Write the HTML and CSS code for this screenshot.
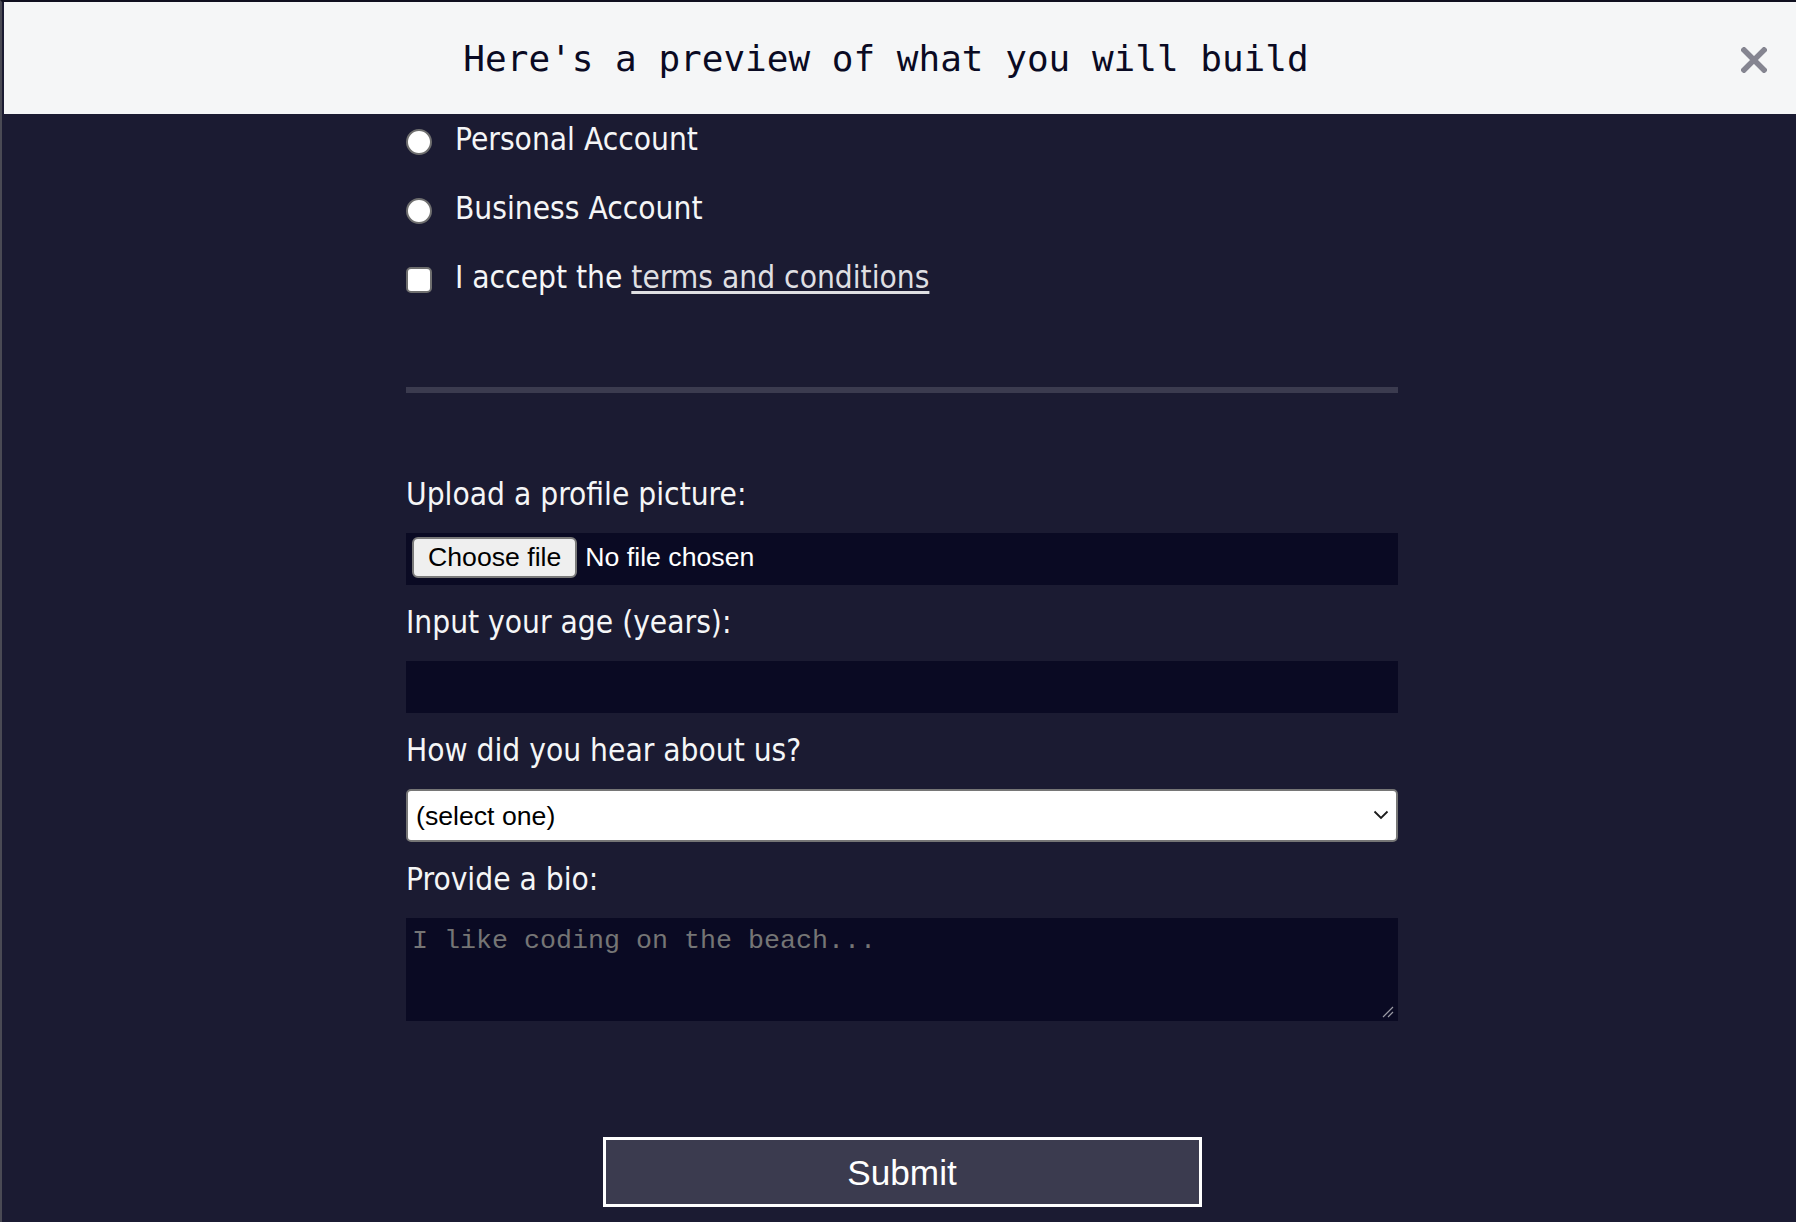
FILE: index.html
```html
<!DOCTYPE html>
<html lang="en">
<head>
<meta charset="utf-8">
<title>Preview</title>
<link rel="stylesheet" href="styles.css">
</head>
<body>
  <header class="modal-header">
    <h3 class="title">Here's a preview of what you will build</h3>
    <button class="close" type="button" aria-label="Close">
      <svg width="26" height="26" viewBox="0 0 26 26"><path d="M3 3 L23 23 M23 3 L3 23" stroke="#858591" stroke-width="5.5" stroke-linecap="square" fill="none"/></svg>
    </button>
  </header>
  <main class="preview">
    <form class="form">
      <fieldset class="group group-top">
        <label class="option"><input class="control radio" type="radio" name="account"><span>Personal Account</span></label>
        <label class="option"><input class="control radio" type="radio" name="account"><span>Business Account</span></label>
        <label class="option"><input class="control check" type="checkbox"><span>I accept the <a class="link" href="#">terms and conditions</a></span></label>
      </fieldset>
      <fieldset class="group fields">
        <label class="field-label" for="profile-pic">Upload a profile picture:</label>
        <label class="text-input file-input">
          <input class="file-native" id="profile-pic" type="file">
          <span class="file-button">Choose file</span>
          <span class="file-status">No file chosen</span>
        </label>
        <label class="field-label" for="age">Input your age (years):</label>
        <input class="text-input" id="age" type="number">
        <label class="field-label" for="referrer">How did you hear about us?</label>
        <div class="select-wrap">
          <select class="select" id="referrer">
            <option>(select one)</option>
            <option>freeCodeCamp News</option>
            <option>freeCodeCamp YouTube Channel</option>
            <option>freeCodeCamp Forum</option>
            <option>Other</option>
          </select>
          <svg class="chevron" width="16" height="10" viewBox="0 0 16 10"><path d="M1.5 1.5 L8 8 L14.5 1.5" stroke="#1b1b1b" stroke-width="1.8" fill="none"/></svg>
        </div>
        <label class="field-label" for="bio">Provide a bio:</label>
        <div class="bio-wrap">
          <textarea class="text-input bio" id="bio" placeholder="I like coding on the beach..."></textarea>
          <svg class="resizer" width="12" height="12" viewBox="0 0 12 12"><path d="M11 1 L1 11 M11 6 L6 11" stroke="#9a9aa4" stroke-width="1.2" fill="none"/></svg>
        </div>
      </fieldset>
      <input class="submit" type="submit" value="Submit">
    </form>
  </main>
</body>
</html>
```
FILE: styles.css
```css
html, body {
  margin: 0;
  height: 100%;
  overflow: hidden;
}

body {
  box-sizing: border-box;
  background: #1b1b32;
  border-left: 2px solid #4a4a54;
  border-top: 2px solid #10101f;
  color: #f5f6f7;
  font-family: "DejaVu Sans Condensed", "Liberation Sans", sans-serif;
  font-size: 31.4px;
}

.modal-header {
  display: flex;
  align-items: center;
  height: 112px;
  margin-left: 2px;
  background: #f5f6f7;
}

.title {
  flex: 1;
  margin: 0;
  padding-left: 27px;
  text-align: center;
  font: 400 36px "DejaVu Sans Mono", monospace;
  color: #0a0a23;
}

.close {
  display: flex;
  width: 26px;
  height: 26px;
  margin: 3px 29px 0 0;
  padding: 0;
  border: 0;
  background: none;
}

.preview {
  padding-left: 6px;
}

.form {
  width: 992px;
  margin: 0 auto;
}

.group {
  margin: 0;
  padding: 0;
  border: none;
  min-width: 0;
}

.group-top {
  display: flex;
  flex-direction: column;
  gap: 29px;
  padding-top: 5px;
  padding-bottom: 90px;
  border-bottom: 6px solid #3b3b4f;
}

.option {
  display: flex;
  align-items: center;
  height: 40px;
}

.control {
  appearance: none;
  flex: none;
  box-sizing: border-box;
  width: 26px;
  height: 26px;
  margin: 6px 23px 0 0;
  border: 2px solid #6f6f6f;
  background: #ffffff;
}

.radio {
  border-radius: 50%;
}

.check {
  border-radius: 5px;
}

.link {
  color: #dfdfe2;
  text-decoration: underline;
  text-underline-offset: 3px;
}

.fields {
  display: flex;
  flex-direction: column;
  padding-top: 64px;
}

.field-label {
  display: flex;
  align-items: center;
  box-sizing: border-box;
  height: 40px;
  margin: 17px 0 19px;
}

.text-input {
  box-sizing: border-box;
  width: 100%;
  height: 52px;
  margin: 0;
  background: #0a0a23;
  border: 2px solid #0a0a23;
  color: #ffffff;
  font: 26.67px "Liberation Sans", sans-serif;
}

.file-input {
  display: flex;
  align-items: flex-start;
  padding: 2px 4px;
  cursor: pointer;
}

.file-native {
  display: none;
}

.file-button {
  box-sizing: border-box;
  height: 41px;
  margin-right: 8px;
  padding: 0 14px;
  border: 2px solid #7a7a7a;
  border-radius: 6px;
  background: #efefef;
  color: #000000;
  line-height: 37px;
}

.file-status {
  line-height: 41px;
}

.select-wrap {
  position: relative;
}

.select {
  appearance: none;
  box-sizing: border-box;
  width: 100%;
  height: 53px;
  margin: 0;
  padding: 0 8px;
  border: 2px solid #767676;
  border-radius: 5px;
  background: #ffffff;
  color: #000000;
  font: 26.67px "Liberation Sans", sans-serif;
}

.chevron {
  position: absolute;
  right: 9px;
  top: 21px;
  pointer-events: none;
}

.bio-wrap {
  position: relative;
  display: flex;
}

.bio {
  height: 103px;
  padding: 6px 4px 4px;
  font: 26.67px "Liberation Mono", monospace;
  resize: none;
}

.bio::placeholder {
  color: #757575;
}

.resizer {
  position: absolute;
  right: 4px;
  bottom: 3px;
  pointer-events: none;
}

.submit {
  display: block;
  box-sizing: border-box;
  width: 599px;
  height: 70px;
  margin: 116px auto 0;
  padding: 2px 0 0;
  background: #3b3b4f;
  border: 3px solid #ffffff;
  color: #ffffff;
  font: 35.2px "Liberation Sans", sans-serif;
}
```
